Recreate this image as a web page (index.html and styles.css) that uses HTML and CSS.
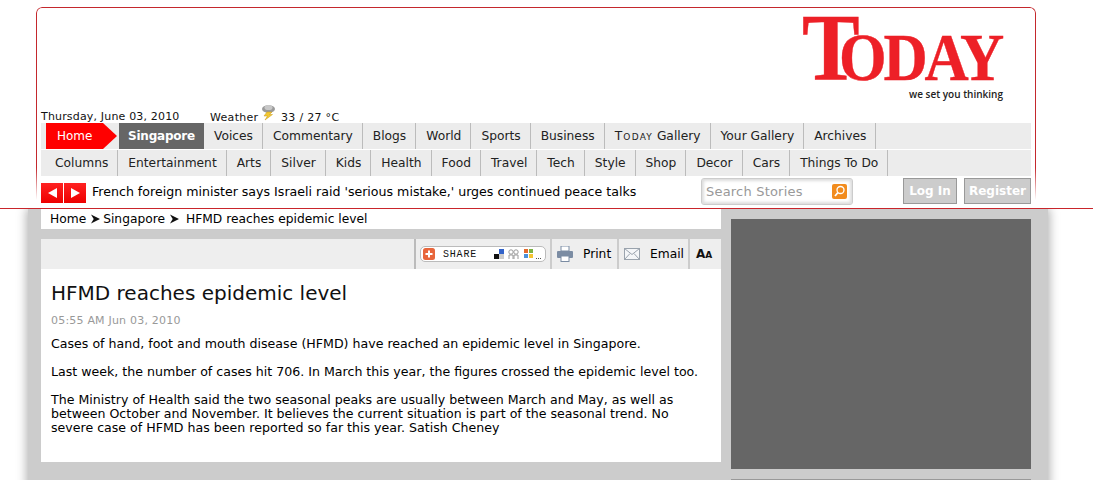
FILE: index.html
```html
<!DOCTYPE html>
<html lang="en">
<head>
<meta charset="utf-8">
<title>HFMD reaches epidemic level</title>
<link rel="stylesheet" href="styles.css">
</head>
<body>
<div class="page">
  <header class="header">
    <div class="header-box">
      <div class="logo-row">
        <div class="logo">
          <div class="logo-word"><span class="logo-t">T</span><span class="logo-rest">ODAY</span></div>
          <div class="logo-tag">we set you thinking</div>
        </div>
      </div>
      <div class="info-row">
        <span class="date">Thursday, June 03, 2010</span>
        <span class="weather">Weather</span>
        <svg class="weather-icon" width="16" height="18" viewBox="0 0 16 18">
          <ellipse cx="6.500" cy="5" rx="6.500" ry="3.800" fill="#9a9a9a"/>
          <ellipse cx="6.500" cy="3.500" rx="4" ry="2.600" fill="#c8c8c8"/>
          <path d="M5 8h5L7.500 10.500h3L3 16l2.500-4H2z" fill="#f2c832" stroke="#c99a1a" stroke-width=".5"/>
        </svg>
        <span class="temp">33 / 27 °C</span>
      </div>
      <nav class="nav-row nav-first">
        <a class="nav-home">Home</a>
        <a class="nav-active">Singapore</a>
        <a class="nav-item">Voices</a>
        <a class="nav-item">Commentary</a>
        <a class="nav-item">Blogs</a>
        <a class="nav-item">World</a>
        <a class="nav-item">Sports</a>
        <a class="nav-item">Business</a>
        <a class="nav-item"><span class="caps">Today</span> Gallery</a>
        <a class="nav-item">Your Gallery</a>
        <a class="nav-item">Archives</a>
      </nav>
      <nav class="nav-row nav-second">
        <a class="nav-item nav-lead">Columns</a>
        <a class="nav-item">Entertainment</a>
        <a class="nav-item">Arts</a>
        <a class="nav-item">Silver</a>
        <a class="nav-item">Kids</a>
        <a class="nav-item">Health</a>
        <a class="nav-item">Food</a>
        <a class="nav-item">Travel</a>
        <a class="nav-item">Tech</a>
        <a class="nav-item">Style</a>
        <a class="nav-item">Shop</a>
        <a class="nav-item">Decor</a>
        <a class="nav-item">Cars</a>
        <a class="nav-item">Things To Do</a>
      </nav>
      <div class="ticker-row">
        <button class="arrow-btn"><svg width="11" height="10" viewBox="0 0 11 10"><path d="M10 0v10L1 5z" fill="#fff"/></svg></button>
        <button class="arrow-btn"><svg width="11" height="10" viewBox="0 0 11 10"><path d="M1 0v10l9-5z" fill="#fff"/></svg></button>
        <span class="ticker-text">French foreign minister says Israeli raid 'serious mistake,' urges continued peace talks</span>
        <div class="search">
          <span class="search-text">Search Stories</span>
          <span class="search-icon"><svg width="15" height="15" viewBox="0 0 15 15"><circle cx="8.500" cy="6" r="3.500" fill="none" stroke="#fff" stroke-width="1.300"/><path d="M6 8.500 3 12" stroke="#fff" stroke-width="1.800"/></svg></span>
        </div>
        <button class="auth-btn btn-login">Log In</button>
        <button class="auth-btn">Register</button>
      </div>
    </div>
  </header>
  <div class="shell">
    <main class="main">
      <div class="crumbs">
        <span>Home</span>
        <svg class="crumb-arrow" width="9" height="10" viewBox="0 0 10 10"><path d="M0 0l10 5-10 5 3-5z" fill="#111"/></svg>
        <span>Singapore</span>
        <svg class="crumb-arrow crumb-last" width="9" height="10" viewBox="0 0 10 10"><path d="M0 0l10 5-10 5 3-5z" fill="#111"/></svg>
        <span>HFMD reaches epidemic level</span>
      </div>
      <div class="toolbar">
        <div class="tool tool-share">
          <div class="share-btn">
            <svg class="share-plus" width="12" height="12" viewBox="0 0 12 12"><rect width="12" height="12" rx="2.500" fill="#e8663c"/><path d="M6 2.500v7M2.500 6h7" stroke="#fff" stroke-width="2"/></svg>
            <span class="share-text">SHARE</span>
            <svg class="share-icons" width="48" height="12" viewBox="0 0 48 12">
              <rect x="0" y="6" width="5" height="5" fill="#111"/>
              <rect x="5" y="1" width="5" height="5" fill="#3263c9"/>
              <rect x="0" y="1" width="5" height="5" fill="#fff"/>
              <rect x="5" y="6" width="5" height="5" fill="#ccc"/>
              <circle cx="17" cy="4" r="2.200" fill="none" stroke="#9a9a9a"/>
              <circle cx="22" cy="4" r="2.200" fill="none" stroke="#9a9a9a"/>
              <path d="M15 11V7h4v4M20 11V7h4v4" fill="none" stroke="#9a9a9a"/>
              <rect x="30" y="1" width="4" height="4" fill="#e46a2c"/>
              <rect x="35" y="1" width="4" height="4" fill="#7cb342"/>
              <rect x="30" y="6" width="4" height="4" fill="#4a90d9"/>
              <rect x="35" y="6" width="4" height="4" fill="#f4c430"/>
              <rect x="42" y="10" width="1" height="1" fill="#555"/>
              <rect x="44" y="10" width="1" height="1" fill="#555"/>
              <rect x="46" y="10" width="1" height="1" fill="#555"/>
            </svg>
          </div>
        </div>
        <div class="tool tool-print">
          <svg width="16" height="16" viewBox="0 0 16 16"><rect x="4" y="0" width="8" height="5" fill="#fff" stroke="#7b8ca3"/><rect x="0" y="5" width="16" height="7" rx="1" fill="#7b8ca3"/><rect x="4" y="10" width="8" height="5.500" fill="#fff" stroke="#7b8ca3"/></svg>
          <span class="tool-label">Print</span>
        </div>
        <div class="tool tool-email">
          <svg width="16" height="12" viewBox="0 0 16 12"><rect x=".5" y=".5" width="15" height="11" fill="#f4f6f8" stroke="#9aa3ad"/><path d="M.5.500 8 6.500l7.500-6M.5 11.500 6 5.500M15.500 11.500 10 5.500" fill="none" stroke="#9aa3ad"/></svg>
          <span class="tool-label">Email</span>
        </div>
        <div class="tool tool-size"><span class="size-big">A</span><span class="size-small">A</span></div>
      </div>
      <article class="article">
        <h1 class="title">HFMD reaches epidemic level</h1>
        <div class="stamp">05:55 AM Jun 03, 2010</div>
        <p class="para">Cases of hand, foot and mouth disease (HFMD) have reached an epidemic level in Singapore.</p>
        <p class="para">Last week, the number of cases hit 706. In March this year, the figures crossed the epidemic level too.</p>
        <p class="para">The Ministry of Health said the two seasonal peaks are usually between March and May, as well as between October and November. It believes the current situation is part of the seasonal trend. No severe case of HFMD has been reported so far this year. Satish Cheney</p>
      </article>
    </main>
    <aside class="side">
      <div class="ad"></div>
      <div class="next-box"></div>
    </aside>
  </div>
</div>
</body>
</html>
```
FILE: styles.css
```css
* { box-sizing: border-box; }
html, body { margin: 0; padding: 0; height: 480px; overflow: hidden; background: #fff; }
body { font-family: "DejaVu Sans", Verdana, sans-serif; font-size: 12.6px; color: #000; }
.page { width: 1093px; height: 480px; overflow: hidden; }
.header { position: relative; z-index: 1; height: 209px; background: #fff; border-bottom: 1px solid #c9252b; padding: 7px 57px 0 36px; }
.header-box { position: relative; width: 1000px; height: 201px; padding: 1px 5px 0; }
.header-box::before { content: ""; position: absolute; inset: 0; border: 1px solid #c4282d; border-bottom: 0; border-radius: 6px 6px 0 0; -webkit-mask-image: linear-gradient(#000 80%, transparent 96%); mask-image: linear-gradient(#000 80%, transparent 96%); }
.logo-row { display: flex; justify-content: flex-end; height: 97px; padding-right: 4px; }
.logo { position: relative; width: 225px; }
.logo-word { display: flex; align-items: baseline; height: 74px; margin-top: 3px; font-family: "Liberation Serif", serif; font-weight: 700; color: #ed2027; line-height: 74px; -webkit-text-stroke: .4px #ed2027; }
.logo-t { font-size: 96px; transform: scaleX(.9); transform-origin: left; }
.logo-rest { font-size: 68px; margin-left: -27px; letter-spacing: -3.500px; transform: scaleX(.9); transform-origin: left; }
.logo-tag { margin-top: 3px; padding-right: 24px; font-family: "Open Sans", sans-serif; font-weight: 600; font-size: 10px; line-height: 13px; text-align: right; color: #222; white-space: nowrap; }
.info-row { display: flex; align-items: flex-end; height: 18px; font-size: 11px; line-height: 11px; letter-spacing: .3px; color: #111; }
.date { width: 169px; line-height: 13px; letter-spacing: .17px; }
.weather { width: 52px; }
.weather-icon { margin-bottom: 1px; }
.temp { margin-left: 3px; }
.nav-row { display: flex; height: 26px; background: #ececec; font-size: 12.25px; line-height: 26px; }
.nav-first { padding-left: 5px; line-height: 27px; }
.nav-second { margin-top: 1px; }
.nav-row a { display: block; white-space: nowrap; color: #222; }
.nav-home { width: 71px; padding-left: 11px; font-size: 12px; background: #f00; color: #fff !important; clip-path: polygon(0 0, 57px 0, 100% 50%, 57px 100%, 0 100%); }
.nav-active { margin-left: 2px; width: 85px; font-size: 12px; letter-spacing: -.2px; background: #666; color: #fff !important; font-weight: 700; text-align: center; }
.nav-item { padding: 0 9px 0 10px; border-right: 1px solid #bbb; }
.nav-lead { padding-left: 14px; }
.caps { font-variant: small-caps; letter-spacing: 1.2px; }
.ticker-row { display: flex; align-items: flex-start; height: 33px; padding-top: 2px; }
.arrow-btn { width: 22px; height: 20px; margin: 5px 1px 0 0; padding: 0; border: 0; background: linear-gradient(#f22, #e00); display: flex; align-items: center; justify-content: center; }
.ticker-text { margin: 6px 0 0 5px; width: 609px; line-height: 16px; white-space: nowrap; }
.search { display: flex; align-items: center; justify-content: space-between; width: 152px; height: 27px; padding: 0 5px 0 4px; background: #fff; border: 1px solid #ccc; border-radius: 3px; box-shadow: inset 0 0 3px 2px #ddd; }
.search-text { color: #999; font-size: 13px; letter-spacing: .2px; }
.search-icon { display: flex; width: 15px; height: 15px; background: #f28c1e; border-radius: 2px; }
.auth-btn { height: 26px; margin-left: 7px; padding: 0; border: 1px solid #999; background: #ccc; color: #fff; font-family: "DejaVu Sans", sans-serif; font-size: 12px; font-weight: 700; width: 67px; }
.btn-login { width: 54px; margin-left: 50px; }
.shell { display: flex; gap: 10px; width: 1020px; height: 280px; margin-left: 28px; padding-left: 13px; background: #ccc; box-shadow: 0 0 10px 1px #aaa; }
.main { width: 680px; }
.crumbs { display: flex; align-items: center; height: 20px; padding-left: 9px; font-size: 12.25px; background: #fff; white-space: nowrap; }
.crumb-arrow { margin: 0 3px 0 5px; }
.crumb-last { margin-right: 7px; }
.toolbar { display: flex; justify-content: flex-end; height: 30px; margin-top: 10px; background: #eee; }
.tool { display: flex; align-items: center; height: 30px; border-left: 2px solid #ccc; }
.tool-share { width: 136px; padding-left: 4px; border-left-color: #bbb; }
.share-btn { display: flex; align-items: center; width: 126px; height: 16px; padding: 0 1px 0 2px; background: #fff; border: 1px solid #bbb; border-radius: 5px; }
.share-text { margin-left: 8px; width: 51px; font-size: 10px; letter-spacing: .8px; color: #111; font-family: "Liberation Mono", monospace; }
.tool-print { width: 67px; padding-left: 5px; }
.tool-email { width: 71px; padding-left: 5px; }
.tool-label { margin-left: 10px; font-size: 12.25px; }
.tool-size { width: 33px; padding-left: 6px; font-weight: 700; color: #111; align-items: baseline; padding-top: 8px; line-height: 14px; }
.size-big { font-size: 12px; }
.size-small { font-size: 9px; }
.article { height: 193px; padding: 12px 10px 0; background: #fff; }
.title { margin: 0; font-size: 20px; font-weight: 400; line-height: 24px; color: #111; }
.stamp { margin-top: 9px; font-size: 11px; line-height: 14px; letter-spacing: .2px; color: #999; }
.para { margin: 0 0 14px; padding-right: 10px; line-height: 14px; }
.stamp + .para { margin-top: 9px; }
.side { width: 300px; padding-top: 10px; }
.ad { height: 250px; background: #666; }
.next-box { height: 1px; margin-top: 10px; background: #999; }
```
